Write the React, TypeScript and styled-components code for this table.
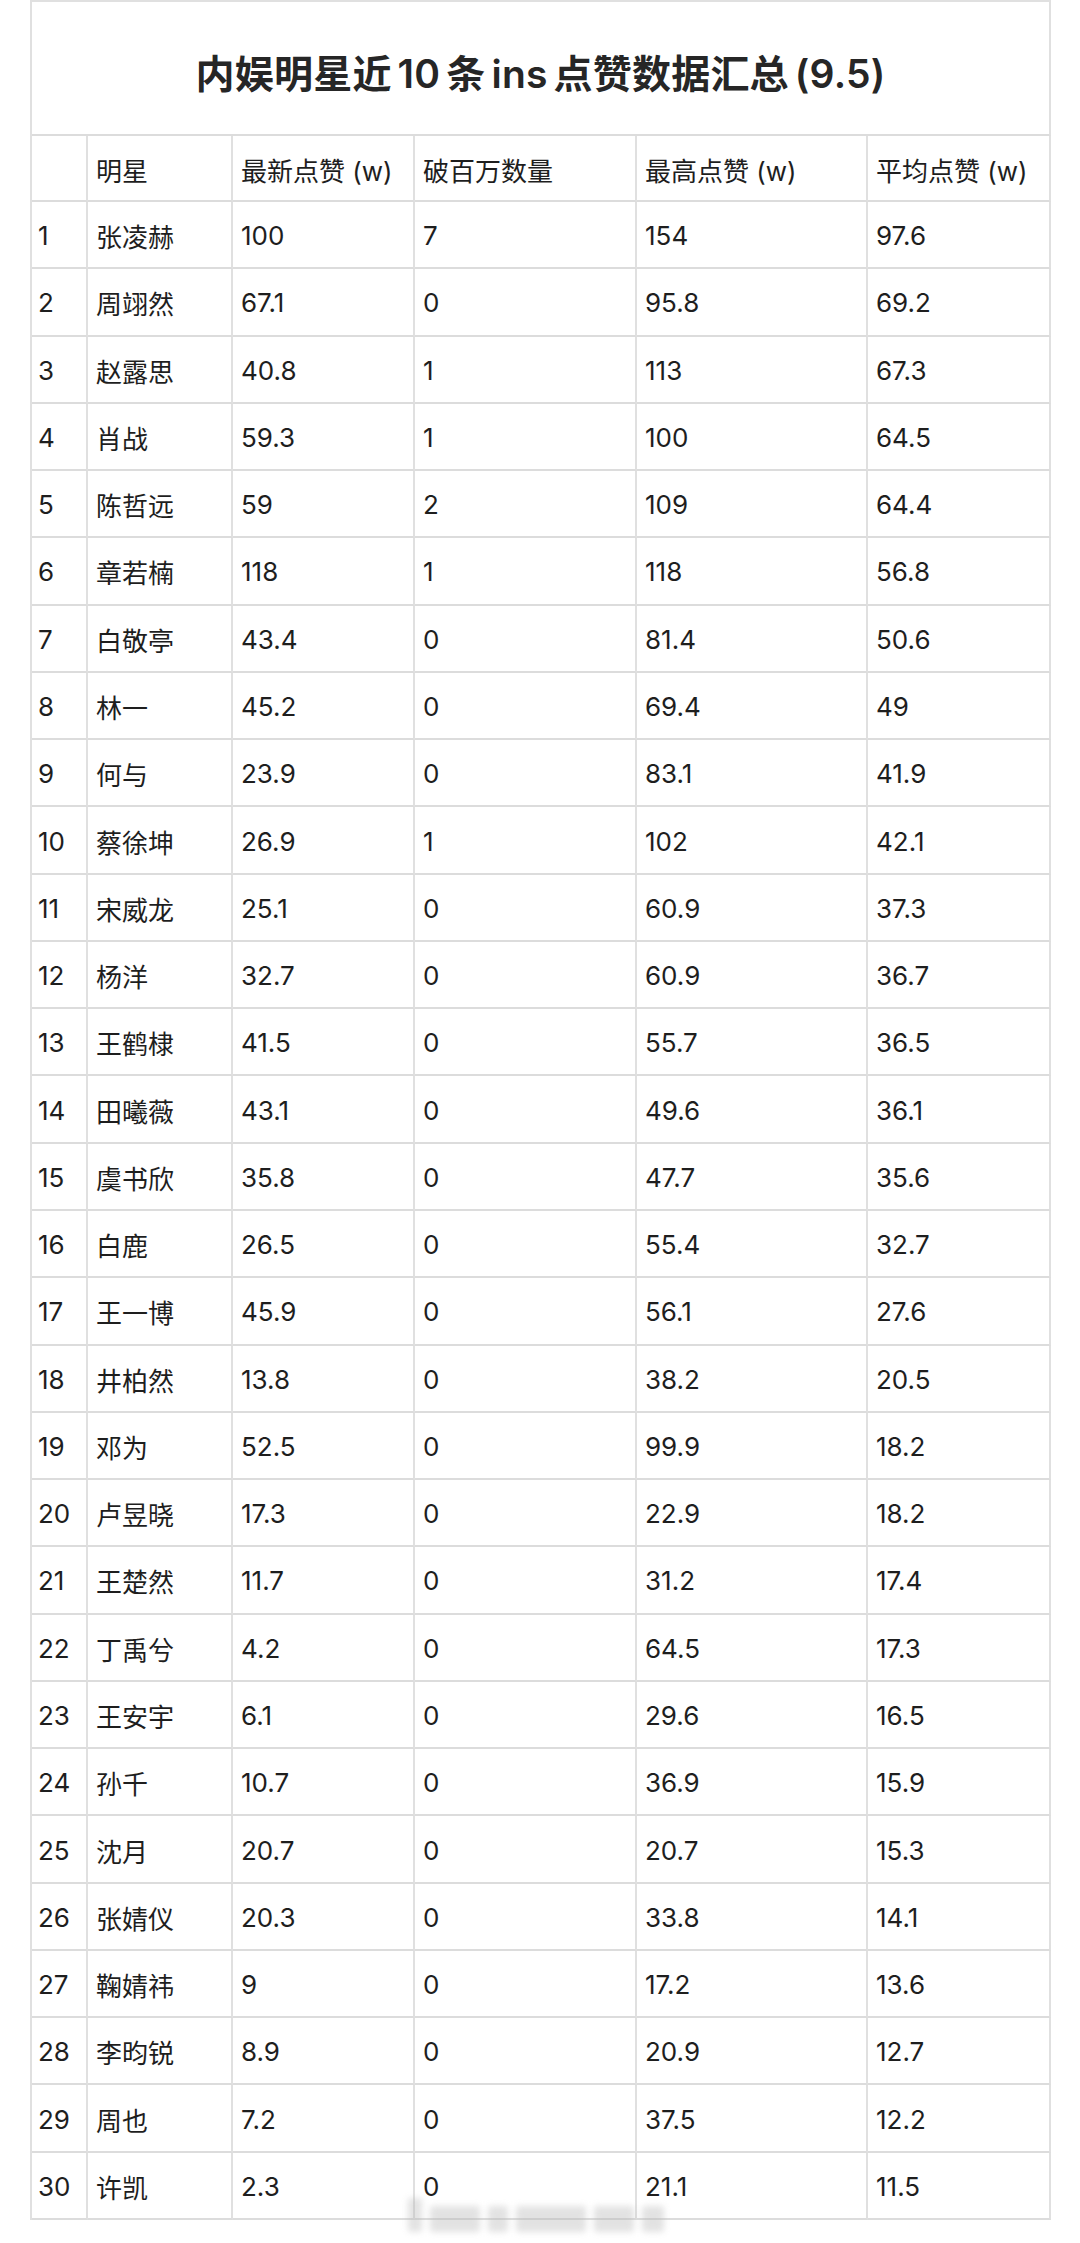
import React from "react";
import styled, { createGlobalStyle } from "styled-components";

const GlobalStyle = createGlobalStyle`
    html, body {
        margin: 0;
        padding: 0;
        background: #ffffff;
    }
    body {
        font-family: "Inter", "Noto Sans CJK SC", sans-serif;
        color: #1c1c1c;
    }
`;

const headers = ["", "明星", "最新点赞 (w)", "破百万数量", "最高点赞 (w)", "平均点赞 (w)"];

const rows: [string, string, string, string, string][] = [
    ["张凌赫", "100", "7", "154", "97.6"],
    ["周翊然", "67.1", "0", "95.8", "69.2"],
    ["赵露思", "40.8", "1", "113", "67.3"],
    ["肖战", "59.3", "1", "100", "64.5"],
    ["陈哲远", "59", "2", "109", "64.4"],
    ["章若楠", "118", "1", "118", "56.8"],
    ["白敬亭", "43.4", "0", "81.4", "50.6"],
    ["林一", "45.2", "0", "69.4", "49"],
    ["何与", "23.9", "0", "83.1", "41.9"],
    ["蔡徐坤", "26.9", "1", "102", "42.1"],
    ["宋威龙", "25.1", "0", "60.9", "37.3"],
    ["杨洋", "32.7", "0", "60.9", "36.7"],
    ["王鹤棣", "41.5", "0", "55.7", "36.5"],
    ["田曦薇", "43.1", "0", "49.6", "36.1"],
    ["虞书欣", "35.8", "0", "47.7", "35.6"],
    ["白鹿", "26.5", "0", "55.4", "32.7"],
    ["王一博", "45.9", "0", "56.1", "27.6"],
    ["井柏然", "13.8", "0", "38.2", "20.5"],
    ["邓为", "52.5", "0", "99.9", "18.2"],
    ["卢昱晓", "17.3", "0", "22.9", "18.2"],
    ["王楚然", "11.7", "0", "31.2", "17.4"],
    ["丁禹兮", "4.2", "0", "64.5", "17.3"],
    ["王安宇", "6.1", "0", "29.6", "16.5"],
    ["孙千", "10.7", "0", "36.9", "15.9"],
    ["沈月", "20.7", "0", "20.7", "15.3"],
    ["张婧仪", "20.3", "0", "33.8", "14.1"],
    ["鞠婧祎", "9", "0", "17.2", "13.6"],
    ["李昀锐", "8.9", "0", "20.9", "12.7"],
    ["周也", "7.2", "0", "37.5", "12.2"],
    ["许凯", "2.3", "0", "21.1", "11.5"],
];

export default function App() {
    return (
        <Page>
            <GlobalStyle />
            <Sheet>
                <TitleCell>内娱明星近 10 条 ins 点赞数据汇总 (9.5)</TitleCell>
                {headers.map((h, i) => (
                    <Cell key={"h" + i} $index={i === 0}>
                        {h}
                    </Cell>
                ))}
                {rows.map((r, i) => (
                    <React.Fragment key={i}>
                        <Cell $index>{i + 1}</Cell>
                        {r.map((v, j) => (
                            <Cell key={j}>{v}</Cell>
                        ))}
                    </React.Fragment>
                ))}
            </Sheet>
            {/* blurred watermark over the last row */}
            <Watermark>
                <Blob $w={14} $h={34} />
                <Blob $w={50} $h={26} />
                <Blob $w={20} $h={26} />
                <Blob $w={70} $h={26} />
                <Blob $w={40} $h={26} />
                <Blob $w={22} $h={26} />
            </Watermark>
        </Page>
    );
}

const Page = styled.div`
    position: relative;
    width: 1080px;
    height: 2243px;
    padding-left: 30px;
    box-sizing: border-box;
    overflow: hidden;
`;

const Sheet = styled.div`
    display: grid;
    width: 1021px;
    grid-template-columns: 56px 145px 182px 222px 231px 183px;
    grid-template-rows: 134px 66px repeat(30, 67.27px);
    border-top: 2px solid #e0e0e0;
    border-left: 2px solid #e0e0e0;
    box-sizing: border-box;
`;

const TitleCell = styled.div`
    grid-column: 1 / -1;
    display: flex;
    align-items: center;
    justify-content: center;
    padding-top: 6px;
    box-sizing: border-box;
    border-right: 2px solid #e0e0e0;
    border-bottom: 2px solid #dcdcdc;
    font-size: 39px;
    font-weight: 600;
    color: #262626;
    word-spacing: -4px;
    letter-spacing: 0.2px;
`;

const Cell = styled.div<{ $index?: boolean }>`
    display: flex;
    align-items: center;
    box-sizing: border-box;
    padding-left: ${(p) => (p.$index ? "6px" : "8px")};
    padding-top: 2px;
    border-right: 2px solid #e0e0e0;
    border-bottom: 2px solid #dcdcdc;
    font-size: 26px;
    color: #1e1e1e;
    white-space: nowrap;
    overflow: hidden;
`;

const Watermark = styled.div`
    position: absolute;
    left: 408px;
    top: 2198px;
    display: flex;
    align-items: flex-end;
    gap: 8px;
    filter: blur(3px);
    opacity: 0.4;
`;

const Blob = styled.span<{ $w: number; $h: number }>`
    display: block;
    width: ${(p) => p.$w}px;
    height: ${(p) => p.$h}px;
    background: #b8b8b8;
    border-radius: 3px;
`;
